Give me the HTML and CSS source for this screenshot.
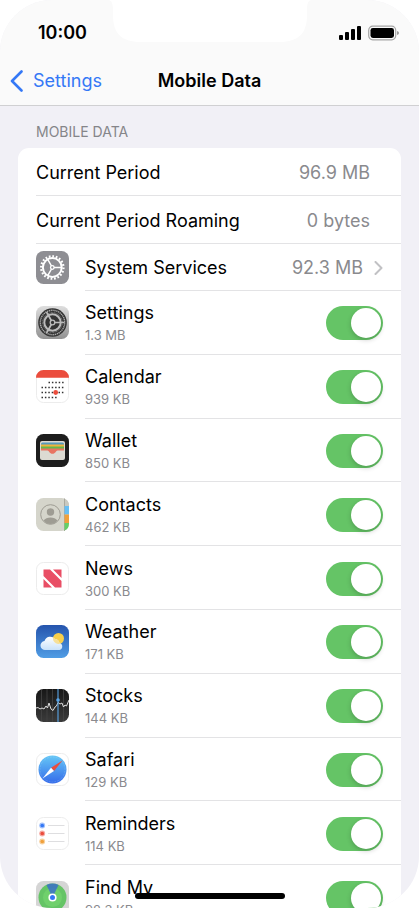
FILE: index.html
```html
<!DOCTYPE html>
<html lang="en">
<head>
<meta charset="utf-8">
<meta name="viewport" content="width=device-width, initial-scale=1">
<title>Mobile Data</title>
<link rel="stylesheet" href="styles.css">
</head>
<body>
<div class="screen">
  <header class="top">
    <div class="notch"><svg width="202" height="42" viewBox="0 0 202 42" aria-hidden="true"><path fill="#fff" d="M0 0C3 1 4 4 4 10V15C4 33 12 42 32 42H170C190 42 198 33 198 15V10C198 4 199 1 202 0Z"/></svg></div>
    <div class="status">
      <time>10:00</time>
      <span class="status-icons">
        <svg width="22" height="14" viewBox="0 0 22 14" aria-hidden="true"><rect y="9" width="4" height="5" rx="1"/><rect x="6" y="6" width="4" height="8" rx="1"/><rect x="12" y="3" width="4" height="11" rx="1"/><rect x="18" width="4" height="14" rx="1"/></svg>
        <svg width="31" height="16" viewBox="0 0 31 16" aria-hidden="true"><rect x=".7" y="1.2" width="27" height="13.6" rx="4" fill="none" stroke="#a5a5a5" stroke-width="1.2"/><rect x="2.5" y="3" width="23.5" height="10" rx="2.4"/><path fill="#999" d="M29 6Q31 6.5 31 8T29 10Z"/></svg>
      </span>
    </div>
    <nav class="nav">
      <a class="back" href="#"><svg width="13" height="22" viewBox="0 0 13 22" aria-hidden="true"><path d="M11.5 1.5L2 11L11.5 20.5" fill="none" stroke="currentColor" stroke-width="2.6" stroke-linecap="round" stroke-linejoin="round"/></svg>Settings</a>
      <h1>Mobile Data</h1>
    </nav>
  </header>
  <main>
    <h2>MOBILE DATA</h2>
    <section class="card">
      <div class="row total"><span>Current Period</span><span class="value">96.9 MB</span></div>
      <div class="row total"><span>Current Period Roaming</span><span class="value">0 bytes</span></div>
      <a class="row system" href="#">
        <svg class="icon" viewBox="0 0 33 33" aria-hidden="true"><rect width="33" height="33" rx="7.5" fill="#8e8e93"/><g fill="none" stroke="#fff"><circle cx="16.3" cy="16.5" r="9.4" stroke-width="2"/><circle cx="16.3" cy="16.5" r="11.2" stroke-width="2.2" pathLength="80" stroke-dasharray="2 2"/><path stroke-width="1.5" d="M18 16.5H25.5M15.5 15L11.7 8.4M15.5 18L11.7 24.6"/><circle cx="16.3" cy="16.5" r="1.8" stroke-width="1.3"/></g></svg>
        <span class="body"><span>System Services</span><span class="value">92.3 MB</span><svg class="chevron" width="9" height="14" viewBox="0 0 9 14" aria-hidden="true"><path d="M1.5 1L7.5 7L1.5 13" fill="none" stroke="#c1c1c4" stroke-width="2" stroke-linecap="round" stroke-linejoin="round"/></svg></span>
      </a>
      <div class="apps">
        <label class="row">
          <svg class="icon" viewBox="0 0 33 33" aria-hidden="true"><defs><linearGradient id="metal" x2="0" y2="1"><stop stop-color="#dedede"/><stop offset="1" stop-color="#929292"/></linearGradient></defs><rect width="33" height="33" rx="7.5" fill="url(#metal)"/><circle cx="16.5" cy="16.5" r="14.3" fill="#333"/><g fill="none"><circle cx="16.5" cy="16.5" r="12.2" stroke="#aaa" stroke-width="1.4" pathLength="120" stroke-dasharray="2 1"/><circle cx="16.5" cy="16.5" r="8.2" stroke="#bbb" stroke-width="2"/><circle cx="16.5" cy="16.5" r="9.8" stroke="#999" stroke-width="1" pathLength="80" stroke-dasharray="1 1"/><path stroke="#bbb" stroke-width="1.7" d="M18 16.5H28.5M15.6 15L10.5 6M15.6 18L10.5 27"/><circle cx="16.5" cy="16.5" r="2.3" stroke="#bbb" stroke-width="1.3"/></g></svg>
          <span class="body"><span class="text"><span>Settings</span><small>1.3 MB</small></span><input type="checkbox" role="switch" checked></span>
        </label>
        <label class="row">
          <svg class="icon" viewBox="0 0 33 33" aria-hidden="true"><rect x=".5" y=".5" width="32" height="32" rx="7" fill="#fff" stroke="#ececec"/><path fill="#eb4d3d" d="M0 7.5A7.5 7.5 0 0 1 7.5 0H25.5A7.5 7.5 0 0 1 33 7.5V7.8H0Z"/><g stroke="#333" stroke-width="1.4" stroke-dasharray="1.5 1.9"><path d="M12.5 12.5H28M5.5 17.5H28M5.5 22.5H28M5.5 27.5H21"/></g><circle cx="19.7" cy="22.5" r="2.4" fill="#eb4d3d"/></svg>
          <span class="body"><span class="text"><span>Calendar</span><small>939 KB</small></span><input type="checkbox" role="switch" checked></span>
        </label>
        <label class="row">
          <svg class="icon" viewBox="0 0 33 33" aria-hidden="true"><rect width="33" height="33" rx="7.5" fill="#1d1d1d"/><rect x="4" y="7" width="25" height="19" rx="2" fill="#dcdad2"/><path fill="#5599bb" d="M5 10Q5 8.500 6.500 8.500H26.500Q28 8.500 28 10V12H5Z"/><path fill="#efb43c" d="M5 10.500H28V13H5Z"/><path fill="#65b84b" d="M5 12.500H28V15H5Z"/><path fill="#e87461" d="M5 14.500H28V16.500H21.500C20 16.500 19.500 19.800 16.500 19.800S13 16.500 11.500 16.500H5Z"/></svg>
          <span class="body"><span class="text"><span>Wallet</span><small>850 KB</small></span><input type="checkbox" role="switch" checked></span>
        </label>
        <label class="row">
          <svg class="icon" viewBox="0 0 33 33" aria-hidden="true"><rect width="33" height="33" rx="7.5" fill="#d5d5cb"/><path fill="#aaa99f" d="M28 .5H29V33H28Z"/><path fill="#c9c9c0" d="M29 1Q33 2.500 33 7.500V8H29Z"/><path fill="#67bff5" d="M28.500 8H33V16.500H28.500Z"/><path fill="#f0a03c" d="M28.500 16.500H33V25H28.500Z"/><path fill="#65cf67" d="M28.500 25H33V25.500Q33 31 28.500 32.500Z"/><circle cx="14.500" cy="16.500" r="9.800" fill="none" stroke="#9e9c93"/><circle cx="14.500" cy="14" r="3.700" fill="#9e9c93"/><path fill="#9e9c93" d="M7.500 22.500Q10 19.500 14.500 19.500T21.500 22.500Q18.500 26 14.500 26T7.500 22.500Z"/></svg>
          <span class="body"><span class="text"><span>Contacts</span><small>462 KB</small></span><input type="checkbox" role="switch" checked></span>
        </label>
        <label class="row">
          <svg class="icon" viewBox="0 0 33 33" aria-hidden="true"><rect x=".5" y=".5" width="32" height="32" rx="7" fill="#fff" stroke="#ececec"/><g fill="#e94e65"><path d="M7.500 7.500H14L25.500 19V25.500H19L7.500 14Z"/><path d="M17 7.500H25.500V16Z"/><path d="M7.500 17L16 25.500H7.500Z"/></g></svg>
          <span class="body"><span class="text"><span>News</span><small>300 KB</small></span><input type="checkbox" role="switch" checked></span>
        </label>
        <label class="row">
          <svg class="icon" viewBox="0 0 33 33" aria-hidden="true"><defs><linearGradient id="sky" x2="0" y2="1"><stop stop-color="#2554ad"/><stop offset="1" stop-color="#509de5"/></linearGradient><linearGradient id="cloud" x2="0" y2="1"><stop stop-color="#fff"/><stop offset="1" stop-color="#c9e2fa"/></linearGradient></defs><rect width="33" height="33" rx="7.5" fill="url(#sky)"/><circle cx="22.500" cy="13.500" r="5.500" fill="#f8cf4b"/><path fill="url(#cloud)" d="M9.500 25A4.500 4.500 0 0 1 8.500 16A6 6 0 0 1 19 14A5 5 0 0 1 23.500 18A3.600 3.600 0 0 1 23.500 25Z"/><path fill="#f8dc87" d="M17.200 12A6 6 0 0 1 19 14A5 5 0 0 1 23.500 18L26 17.600A5.500 5.500 0 0 1 17.200 12Z" opacity=".85"/></svg>
          <span class="body"><span class="text"><span>Weather</span><small>171 KB</small></span><input type="checkbox" role="switch" checked></span>
        </label>
        <label class="row">
          <svg class="icon" viewBox="0 0 33 33" aria-hidden="true"><defs><linearGradient id="ink" x2="0" y2="1"><stop stop-color="#171717"/><stop offset="1" stop-color="#3b3b3b"/></linearGradient></defs><rect width="33" height="33" rx="7.5" fill="url(#ink)"/><path stroke="#454545" stroke-width=".8" d="M5.500 1V32M11 0V33M16.500 0V33M27.500 1V32"/><path fill="none" stroke="#ddd" stroke-width="1" stroke-linejoin="round" d="M0 19L2 18.500L4 20L6 19L8 20L10 17L11.500 19L13 14L15 20L17 21.500L19 18L20.500 17L22 13.500L24 15L26 14L27.500 18L29 16L30.500 17L33 11"/><path stroke="#59a5e8" stroke-width="1.100" d="M22 0V33"/><circle cx="22" cy="11" r="1.800" fill="#59a5e8"/></svg>
          <span class="body"><span class="text"><span>Stocks</span><small>144 KB</small></span><input type="checkbox" role="switch" checked></span>
        </label>
        <label class="row">
          <svg class="icon" viewBox="0 0 33 33" aria-hidden="true"><defs><linearGradient id="sea" x2="0" y2="1"><stop stop-color="#65c7f6"/><stop offset="1" stop-color="#356bea"/></linearGradient></defs><rect x=".5" y=".5" width="32" height="32" rx="7" fill="#fff" stroke="#ececec"/><circle cx="16.500" cy="16.500" r="14" fill="url(#sea)"/><circle cx="16.500" cy="16.500" r="12.500" fill="none" stroke="#b8def9" stroke-width="1" stroke-dasharray=".5 1.100" opacity=".5"/><path fill="#eb4d3d" d="M26.500 7.500L15 14.700L18 18Z"/><path fill="#fff" d="M6.500 25.500L15 14.700L18 18Z"/></svg>
          <span class="body"><span class="text"><span>Safari</span><small>129 KB</small></span><input type="checkbox" role="switch" checked></span>
        </label>
        <label class="row">
          <svg class="icon" viewBox="0 0 33 33" aria-hidden="true"><rect x=".5" y=".5" width="32" height="32" rx="7" fill="#fff" stroke="#ececec"/><path stroke="#dedee0" d="M12 8.500H28.500M12 16.500H28.500M12 24.500H28.500"/><g stroke-width="1.100"><circle cx="6.200" cy="8.500" r="2.400" fill="#3478f6" stroke="#a3c2fa"/><circle cx="6.200" cy="16.500" r="2.400" fill="#eb4d3d" stroke="#f5aaa3"/><circle cx="6.200" cy="24.500" r="2.400" fill="#f0a03c" stroke="#f7d19f"/></g></svg>
          <span class="body"><span class="text"><span>Reminders</span><small>114 KB</small></span><input type="checkbox" role="switch" checked></span>
        </label>
        <label class="row">
          <svg class="icon" viewBox="0 0 33 33" aria-hidden="true"><rect width="33" height="33" rx="7.5" fill="#d5d5d5"/><circle cx="16.500" cy="16.500" r="14" fill="#65c466"/><circle cx="16.500" cy="16.500" r="9.500" fill="#70d06c"/><path fill="#3b70c8" opacity=".85" d="M16.500 16.500L10.500 3.900A14 14 0 0 1 22.500 3.900Z"/><circle cx="16.500" cy="16.500" r="3.300" fill="#3478f6" stroke="#fff" stroke-width="1.600"/></svg>
          <span class="body"><span class="text"><span>Find My</span><small>92.3 KB</small></span><input type="checkbox" role="switch" checked></span>
        </label>
      </div>
    </section>
  </main>
  <div class="home"></div>
</div>
</body>
</html>
```
FILE: styles.css
```css
* { box-sizing: border-box; }

body {
  margin: 0;
  background: #fff;
  color: #000;
  font: 18px/24px Inter, "Liberation Sans", sans-serif;
}

a { color: inherit; text-decoration: none; }

.screen {
  position: relative;
  height: 100vh;
  overflow: hidden;
  border-radius: 52px;
  background: #f1f0f6;
}

.top {
  position: relative;
  background: #fafafa;
  border-bottom: 1px solid #d0d0d2;
}

.notch {
  position: absolute;
  top: 0;
  left: 0;
  right: 0;
  display: flex;
  justify-content: center;
}

.status {
  position: relative;
  display: flex;
  align-items: center;
  justify-content: space-between;
  padding: 21px 20px 11px 38px;
  font-weight: 600;
}

.status-icons {
  display: flex;
  align-items: center;
  gap: 7px;
}

.nav {
  display: grid;
  grid-template-columns: 1fr auto 1fr;
  align-items: center;
  height: 49px;
  padding: 0 10px;
}

.back {
  display: flex;
  align-items: center;
  gap: 10px;
  color: #3478f6;
}

h1 {
  margin: 0;
  font-size: 18px;
  font-weight: 600;
}

main { padding: 16px 18px 0; }

h2 {
  margin: 0 18px 6px;
  color: #858589;
  font-size: 14px;
  font-weight: 400;
  line-height: 20px;
}

.card {
  overflow: hidden;
  border-radius: 11px;
  background: #fff;
}

.row {
  display: flex;
  align-items: center;
  gap: 16px;
  padding-left: 18px;
}

.total {
  min-height: 48px;
  margin-left: 18px;
  padding: 2px 31px 0 0;
  border-bottom: 1px solid #e3e3e5;
}

.value {
  margin-left: auto;
  color: #8a8a8e;
}

.system { height: 47px; }

.icon {
  flex: none;
  width: 33px;
  height: 33px;
}

.body {
  display: flex;
  flex: 1;
  align-items: center;
  align-self: stretch;
  padding: 2px 18px 0 0;
  border-bottom: 1px solid #e3e3e5;
}

.chevron { margin-left: 11px; }

/* Every app row takes an equal share of the list. */
.apps {
  display: grid;
  grid-auto-rows: 1fr;
  min-height: 638px;
}

.text {
  display: flex;
  flex: 1;
  flex-direction: column;
}

small {
  color: #8a8a8e;
  font-size: 13px;
  line-height: 20px;
}

input {
  appearance: none;
  width: 57px;
  height: 34px;
  margin: 0;
  padding: 2px;
  border-radius: 17px;
  background: #c9c9cc;
}

input::before {
  content: "";
  display: block;
  width: 30px;
  height: 30px;
  border-radius: 50%;
  background: #fff;
  box-shadow: 0 2px 5px rgb(0 0 0 / 20%);
}

input:checked { background: #65c466; }

input:checked::before { margin-left: auto; }

.home {
  position: absolute;
  bottom: 9px;
  left: 50%;
  width: 150px;
  height: 6px;
  border-radius: 3px;
  background: #000;
  transform: translateX(-50%);
}
```
